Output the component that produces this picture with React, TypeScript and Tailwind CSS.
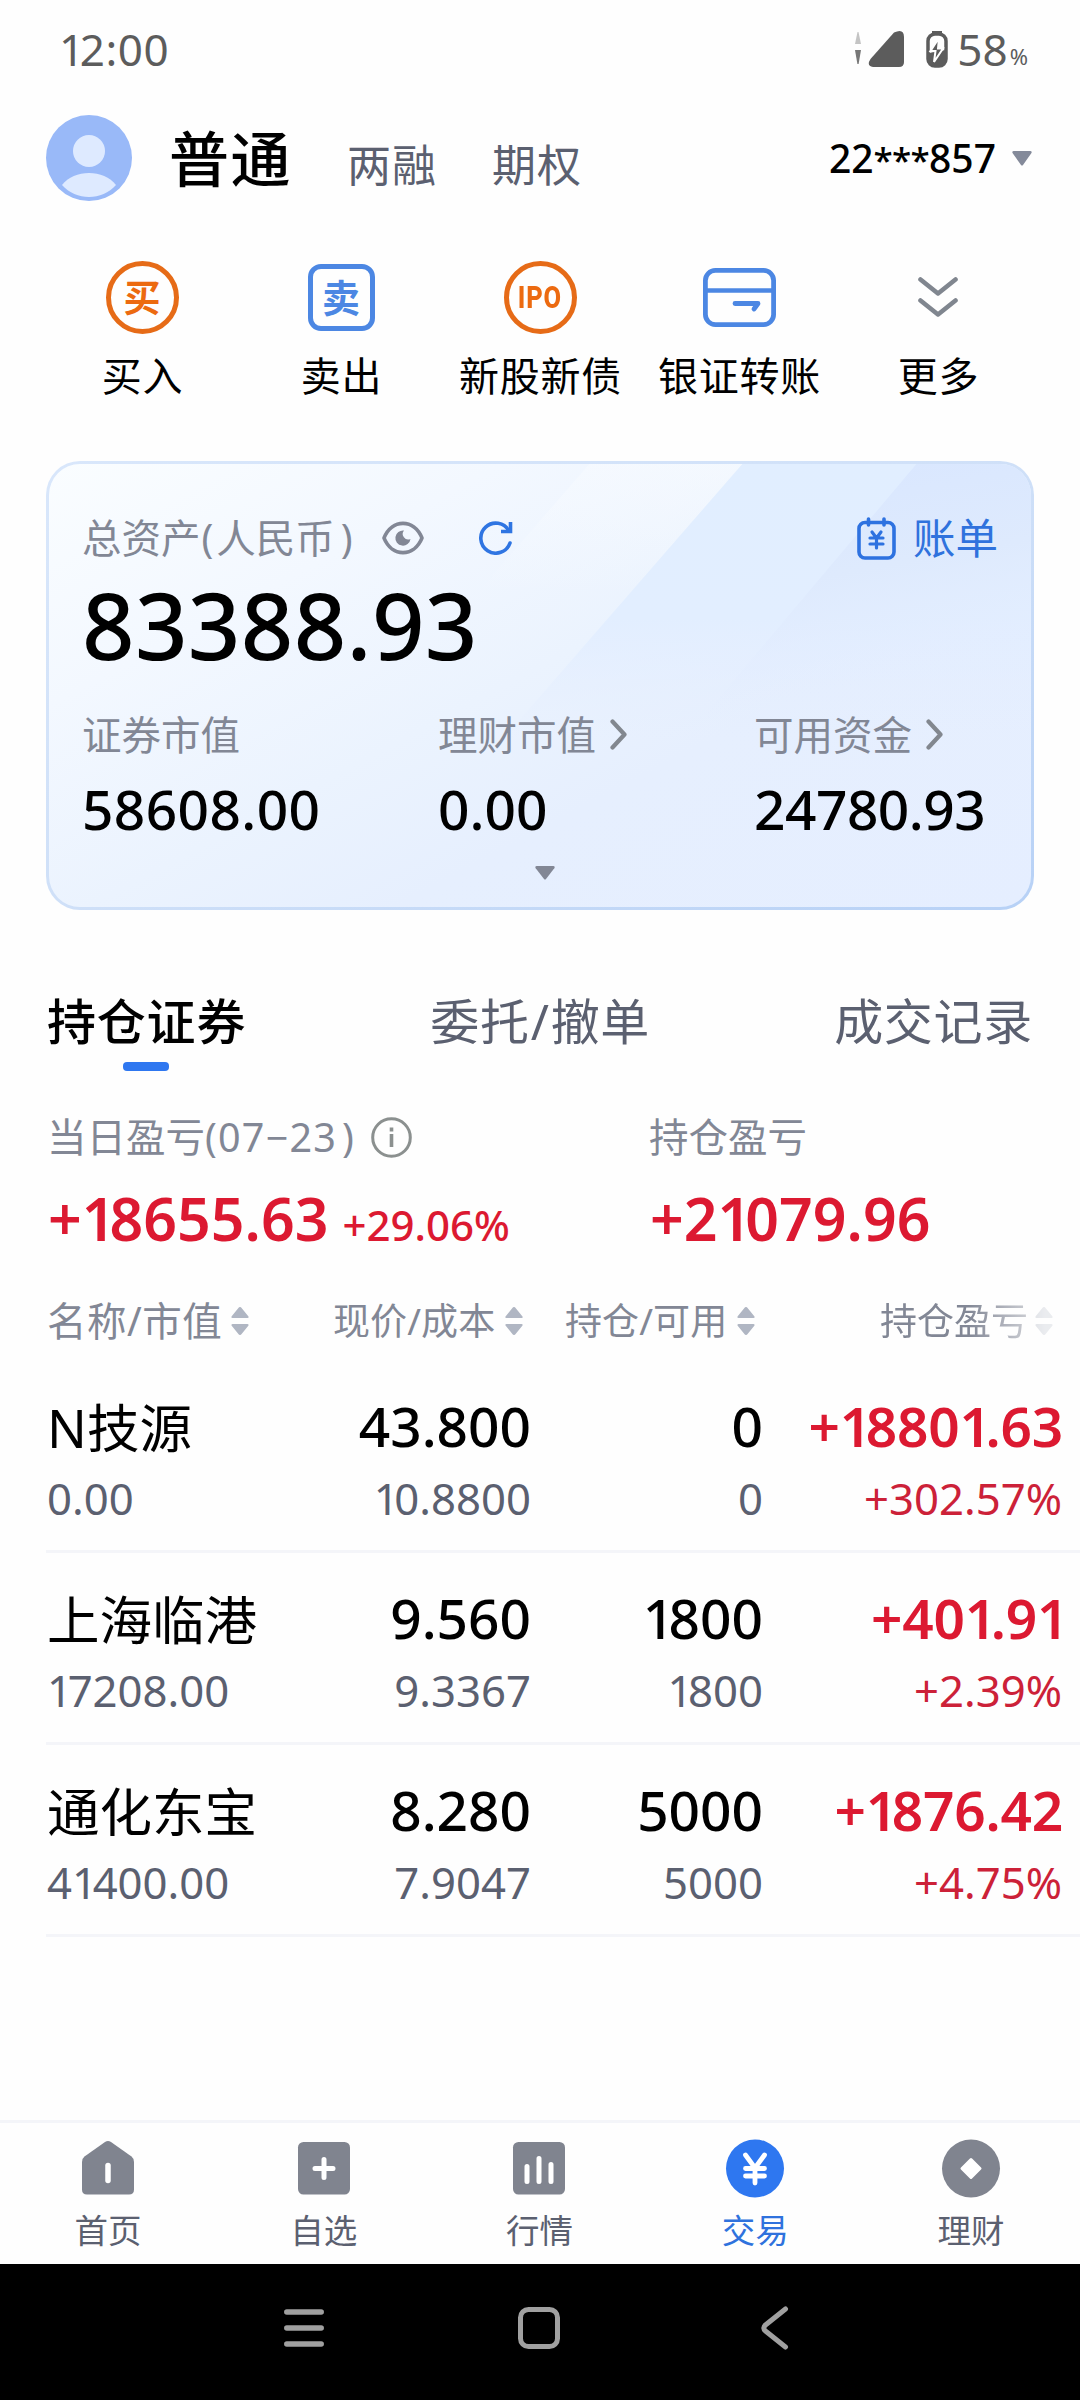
import type { ReactNode } from "react";

// Figures are set with a narrow "1" and a compact asterisk.
function Num({ children, className = "" }: { children: string; className?: string }) {
  return (
    <span className={"whitespace-nowrap " + className}>
      {children.split(/(1|\*+)/).map((part, i) => {
        if (part === "1") return <span key={i} className="tracking-[-0.100em]">1</span>;
        if (part.startsWith("*")) return <span key={i} className="text-[0.900em] tracking-[-0.020em]">{part}</span>;
        return part;
      })}
    </span>
  );
}

function StatusBar() {
  return (
    <div className="flex h-[98px] shrink-0 items-center pl-[59px] pr-[52px] text-[#5c5c5c]">
      <Num className="text-[44px] leading-[50px] tracking-[0.500px]">12:00</Num>
      <svg className="ml-auto" width="96" height="40" viewBox="0 0 96 40">
        <path d="M4.500 3h1l2.500 12h-6z" fill="#c4c4c4" />
        <path d="M2 21h6L5.600 35h-1.200z" fill="#777" />
        <path d="M41 3.500Q51 -1 51 8v25q0 5-5 5H20q-7-1-2.500-8z" fill="#5c5c5c" />
        <path d="M79 2h10v3h-10z" fill="#5c5c5c" />
        <rect x="75" y="5" width="18" height="32" rx="7" fill="#fff" stroke="#5c5c5c" strokeWidth="3.500" />
        <path d="M74 24c5 0 9-2 19-3v9q0 7-7 7h-4q-8 0-8-7z" fill="#5c5c5c" />
        <path d="M86 9L77.500 22h5L81 33l9-13.500h-5z" fill="#5c5c5c" stroke="#fff" strokeWidth="2" />
      </svg>
      <span className="ml-[8px] text-[44px] leading-[50px]">58</span>
      <span className="ml-[2px] mt-[13px] text-[22px] leading-[24px]">%</span>
    </div>
  );
}

function Header() {
  return (
    <div className="flex h-[120px] shrink-0 items-center pl-[46px] pr-[48px]">
      <svg width="86" height="86" viewBox="0 0 86 86">
        <circle cx="43" cy="43" r="43" fill="#99b9f8" />
        <circle cx="43" cy="36" r="16" fill="#deeaff" />
        <path d="M16 70C28 54 58 54 70 70C56 86 30 86 16 70z" fill="#deeaff" />
      </svg>
      <span className="ml-[37px] mt-[2px] text-[60px] font-medium leading-[80px] tracking-[1.500px] text-black">普通</span>
      <span className="ml-[55px] mt-[13px] text-[44px] leading-[60px] tracking-[1px] text-[#5b6070]">两融</span>
      <span className="ml-[55px] mt-[13px] text-[44px] leading-[60px] tracking-[1px] text-[#5b6070]">期权</span>
      <Num className="ml-auto text-[39px] font-medium leading-[50px] text-black">22***857</Num>
      <svg className="ml-[16px]" width="20" height="15" viewBox="0 0 20 15">
        <path d="M1.500 0h17q2 0.500 0.800 2.200L11 14q-1 1-2 0L0.700 2.200Q-0.500 0.500 1.500 0z" fill="#848a9a" />
      </svg>
    </div>
  );
}

function Action({ label, children }: { label: string; children: ReactNode }) {
  return (
    <div className="flex flex-col items-center">
      <div className="flex h-[80px] items-center justify-center">{children}</div>
      <span className="mt-[15px] whitespace-nowrap pl-px text-[40px] leading-[48px] tracking-[0.700px] text-black">{label}</span>
    </div>
  );
}

function Actions() {
  return (
    <div className="mt-[39px] grid shrink-0 grid-cols-[repeat(5,199px)] justify-center">
      <Action label="买入">
        <span className="flex h-[73px] w-[73px] items-center justify-center rounded-full border-[5px] border-[#e66b17] text-[37px] font-bold leading-none text-[#ec6a10]">买</span>
      </Action>
      <Action label="卖出">
        <span className="flex h-[67px] w-[67px] items-center justify-center rounded-[13px] border-[5px] border-[#4c87e3] text-[38px] font-bold leading-none text-[#4c87e3]">卖</span>
      </Action>
      <Action label="新股新债">
        <span className="flex h-[73px] w-[73px] items-center justify-center rounded-full border-[5px] border-[#e66b17] text-[#ec6a10]">
          <span className="scale-x-[0.820] font-['Roboto',sans-serif] text-[31px] font-extrabold leading-none tracking-[1px]">IPO</span>
        </span>
      </Action>
      <Action label="银证转账">
        <svg width="73" height="59" viewBox="0 0 73 59" fill="none" stroke="#4c87e3" strokeWidth="4.800">
          <rect x="2.400" y="2.400" width="68.200" height="54.200" rx="10" />
          <path d="M2 22.500h69" strokeWidth="4.400" />
          <path d="M32 35.500h23l-4 5.500" strokeLinecap="round" strokeLinejoin="round" />
        </svg>
      </Action>
      <Action label="更多">
        <svg width="40" height="40" viewBox="0 0 40 40" fill="none" stroke="#80868f" strokeWidth="4.600" strokeLinecap="round" strokeLinejoin="round">
          <path d="M2.500 2.500L20 16.500L37.500 2.500M2.500 23.500L20 37.500L37.500 23.500" />
        </svg>
      </Action>
    </div>
  );
}

function Chevron() {
  return (
    <svg width="17" height="32" viewBox="0 0 17 32" fill="none" stroke="#82878f" strokeWidth="4.200" strokeLinecap="round" strokeLinejoin="round">
      <path d="M2.500 2.500L14.500 15.500L2.500 28.500" />
    </svg>
  );
}

function CardSheen() {
  return (
    <svg className="absolute inset-0" width="982" height="443" viewBox="3 3 982 443">
      <defs>
        <linearGradient id="a" x1="0" y1="0" x2="0" y2="1">
          <stop offset="0" stopColor="#f8fbff" stopOpacity="0.550" />
          <stop offset="0.300" stopColor="#f8fbff" stopOpacity="0" />
        </linearGradient>
        <linearGradient id="b" x1="0" y1="0" x2="0" y2="1">
          <stop offset="0" stopColor="#e1eeff" />
          <stop offset="0.350" stopColor="#e2eeff" />
          <stop offset="0.620" stopColor="#e4edff" stopOpacity="0" />
        </linearGradient>
        <linearGradient id="c" x1="0.300" y1="0" x2="0.500" y2="1">
          <stop offset="0" stopColor="#d8e6ff" />
          <stop offset="0.300" stopColor="#deeafd" />
          <stop offset="0.560" stopColor="#e4edff" stopOpacity="0" />
        </linearGradient>
      </defs>
      <path d="M546 0H699L308 449H155z" fill="url(#a)" />
      <path d="M699 0H988V449H308z" fill="url(#b)" />
      <path d="M873 0H988V449H494z" fill="url(#c)" />
    </svg>
  );
}

function AssetCard() {
  return (
    <div className="mx-[46px] mt-[61px] h-[449px] shrink-0 rounded-[34px] bg-linear-to-br from-[#d9e7fb] via-[#cfe0f8] to-[#b7d1f6] p-[3px]">
      <div className="relative h-full overflow-hidden rounded-[31px] bg-[linear-gradient(152deg,#fafdff_0%,#f3f8ff_25%,#ebf3fe_48%,#e6effe_65%,#e5eeff_100%)]">
        <CardSheen />
        <div className="relative pl-[33px] pr-[33px] pt-[50px]">
          <div className="flex h-[48px] items-center">
            <span className="whitespace-nowrap text-[39.500px] leading-[48px] text-[#828795]">
              总资产<span className="mr-[3px] ml-[1px]">(</span>人民币<span className="ml-[6px]">)</span>
            </span>
            <svg className="ml-[29px]" width="42" height="34" viewBox="0 0 42 34">
              <path d="M2 17C10-2.500 32-2.500 40 17C32 36.500 10 36.500 2 17z" fill="none" stroke="#828795" strokeWidth="3.600" strokeLinejoin="round" />
              <path d="M22 9.500a7.600 7.600 0 1 0 6.500 8.500a5.500 5.500 0 0 1-6.500-8.500z" fill="#828795" />
            </svg>
            <svg className="ml-[55px]" width="34" height="34" viewBox="0 0 34 34" fill="none" stroke="#2f75e2" strokeWidth="3.600">
              <path d="M31 22A15 15 0 1 1 30 10" strokeLinecap="round" />
              <path d="M31.500 1V10.500H22" />
            </svg>
            <svg className="ml-auto" width="39" height="43" viewBox="0 0 39 43" fill="none" stroke="#2e72e0" strokeWidth="3.600" strokeLinecap="round">
              <rect x="2" y="5.500" width="35" height="35.500" rx="6" />
              <path d="M11.500 2v6M27 2v6" />
              <path d="M15 15l4.500 6l4.500-6M13 21h13M13 27h13M19.500 21v10" strokeWidth="3.200" />
            </svg>
            <span className="ml-[17px] text-[42.500px] leading-[48px] text-[#2f72dd]">账单</span>
          </div>
          <Num className="mt-[13px] block h-[100px] text-[92px] font-medium leading-[100px] tracking-[0.300px] text-black">83388.93</Num>
          <div className="mt-[36px] grid grid-cols-[356px_316px_auto] text-[39.500px] leading-[48px] text-[#828795]">
            <span>证券市值</span>
            <span className="flex items-center gap-[14px]">理财市值<Chevron /></span>
            <span className="flex items-center gap-[14px]">可用资金<Chevron /></span>
          </div>
          <div className="mt-[20px] grid grid-cols-[356px_316px_auto] text-[55px] font-medium leading-[60px] text-black">
            <Num className="tracking-[0.400px]">58608.00</Num>
            <Num>0.00</Num>
            <Num className="tracking-[-0.500px]">24780.93</Num>
          </div>
          <svg className="ml-[453px] mt-[27px]" width="20" height="14" viewBox="0 0 20 14">
            <path d="M1.500 0h17q2 0.500 0.800 2.200L11 13q-1 1-2 0L0.700 2.200Q-0.500 0.500 1.500 0z" fill="#828795" />
          </svg>
        </div>
      </div>
    </div>
  );
}

function Tabs() {
  return (
    <div className="mt-[81px] flex h-[80px] shrink-0 items-start justify-between pl-[47px] pr-[47px] text-[49px] leading-[60px] text-[#5b6070]">
      <div className="flex flex-col items-start text-black">
        <span className="font-medium tracking-[0.800px]">持仓证券</span>
        <span className="ml-[76px] mt-[11px] h-[9px] w-[46px] rounded-[4px] bg-[#2e77f0]" />
      </div>
      <span className="tracking-[0.700px]">委托<span className="mx-[1px]">/</span>撤单</span>
      <span className="tracking-[0.700px]">成交记录</span>
    </div>
  );
}

function Profit() {
  return (
    <div className="mt-[42px] grid shrink-0 grid-cols-[602px_auto] pl-[47px]">
      <span className="flex items-center text-[39.500px] leading-[48px] text-[#828795]">
        <span>当日盈亏<span className="tracking-[1.200px]">(07−23<span className="ml-[5px]">)</span></span></span>
        <svg className="ml-[16px]" width="41" height="41" viewBox="0 0 41 41" fill="none" stroke="#8b908f" strokeWidth="3">
          <circle cx="20.500" cy="20.500" r="18.800" />
          <path d="M20.500 17v13" strokeWidth="3.600" />
          <path d="M20.500 10.500v4" strokeWidth="3.600" />
        </svg>
      </span>
      <span className="text-[39.500px] leading-[48px] text-[#828795]">持仓盈亏</span>
      <span className="mt-[22px] flex h-[70px] items-baseline text-[59px] font-semibold leading-[70px] text-[#dc1931]">
        <Num className="pl-px">+18655.63</Num>
        <Num className="ml-[14px] text-[42px] font-medium">+29.06%</Num>
      </span>
      <Num className="mt-[22px] pl-px text-[59px] font-semibold leading-[70px] text-[#dc1931]">+21079.96</Num>
    </div>
  );
}

function Sort() {
  return (
    <svg width="18" height="28" viewBox="0 0 18 28" fill="#b0b6c3">
      <path d="M9 0Q10 0 10.800 1.200L17.500 9.500Q18 11 16.500 11H1.500Q0 11 0.500 9.500L7.200 1.200Q8 0 9 0zM9 28Q8 28 7.200 26.800L0.500 18.500Q0 17 1.500 17H16.500Q18 17 17.500 18.500L10.800 26.800Q10 28 9 28z" />
    </svg>
  );
}

function TableHead() {
  return (
    <div className="mt-[44px] grid h-[48px] shrink-0 grid-cols-[286px_232px_315px_auto] pl-[47px] text-[37px] leading-[48px] text-[#828795]">
      <span className="flex items-center gap-[9px] text-[39.500px] tracking-[0.500px]">名称/市值<Sort /></span>
      <span className="flex items-center gap-[10px] tracking-[0.100px]">现价/成本<Sort /></span>
      <span className="flex items-center gap-[10px] tracking-[0.100px]">持仓/可用<Sort /></span>
      <span className="flex items-center gap-[7px] [mask-image:linear-gradient(to_right,#000_88px,rgba(0,0,0,0.250)_165px)]">持仓盈亏<Sort /></span>
    </div>
  );
}

const holdings = [
  { name: "N技源", value: "0.00", price: "43.800", cost: "10.8800", held: "0", usable: "0", profit: "+18801.63", rate: "+302.57%" },
  { name: "上海临港", value: "17208.00", price: "9.560", cost: "9.3367", held: "1800", usable: "1800", profit: "+401.91", rate: "+2.39%" },
  { name: "通化东宝", value: "41400.00", price: "8.280", cost: "7.9047", held: "5000", usable: "5000", profit: "+1876.42", rate: "+4.75%" },
];

function Holdings() {
  return (
    <div className="mt-[16px] shrink-0 pl-[46px]">
      {holdings.map((h) => (
        <div key={h.name} className="h-[192px] border-b-[3px] border-[#f4f5f9] pt-[33px]">
          <div className="grid grid-cols-[234px_251px_232px_300px] text-right text-[55px] font-medium leading-[64px] text-black">
            <span className="whitespace-nowrap pl-px pt-[2px] text-left text-[52.500px] font-normal">{h.name}</span>
            <Num>{h.price}</Num>
            <Num>{h.held}</Num>
            <Num className="font-semibold tracking-[-0.200px] text-[#dc1931]">{h.profit}</Num>
          </div>
          <div className="mt-[13px] grid grid-cols-[234px_251px_232px_299px] text-right text-[43.700px] leading-[50px] text-[#5b6070]">
            <Num className="pl-px text-left">{h.value}</Num>
            <Num>{h.cost}</Num>
            <Num>{h.usable}</Num>
            <Num className="text-[#cc2138]">{h.rate}</Num>
          </div>
        </div>
      ))}
    </div>
  );
}

function NavItem({ label, active, children }: { label: string; active?: boolean; children: ReactNode }) {
  return (
    <div className={"flex flex-col items-center pt-[15px] " + (active ? "text-[#2f72dd]" : "text-[#5b6070]")}>
      <svg width="60" height="60" viewBox="0 0 60 60" fill="none" stroke="#fff" strokeWidth="5" strokeLinecap="round">
        {children}
      </svg>
      <span className="mt-[10px] text-[33.500px] leading-[44px]">{label}</span>
    </div>
  );
}

function BottomNav() {
  return (
    <div className="mt-auto grid h-[144px] shrink-0 grid-cols-5 border-t-[3px] border-[#f4f5f9] pr-px">
      <NavItem label="首页">
        <path d="M27 4Q30 2 33 4L53.500 18.500Q56 20.500 56 24V51.500Q56 56.500 51 56.500H9Q4 56.500 4 51.500V24Q4 20.500 6.500 18.500z" fill="#80848f" stroke="none" />
        <path d="M30 27.500v15" strokeWidth="5.500" />
      </NavItem>
      <NavItem label="自选">
        <rect x="4" y="4" width="52" height="52.500" rx="5.500" fill="#80848f" stroke="none" />
        <path d="M30 21.500v18M21 30.500h18" />
      </NavItem>
      <NavItem label="行情">
        <rect x="4" y="4" width="52" height="52.500" rx="5.500" fill="#80848f" stroke="none" />
        <path d="M18 28.500v15M30 20.500v23M42 26.500v17" />
      </NavItem>
      <NavItem label="交易" active>
        <circle cx="30" cy="30.500" r="29" fill="#2e77f0" stroke="none" />
        <path d="M20.500 17L30 30l9.500-13M20.500 30.500h19M20.500 38h19M30 30v15" strokeWidth="4.800" />
      </NavItem>
      <NavItem label="理财">
        <circle cx="30" cy="30.500" r="29" fill="#80848f" stroke="none" />
        <path d="M30 21.500L39 30.500L30 39.500L21 30.500z" fill="#fff" strokeWidth="3" strokeLinejoin="round" />
      </NavItem>
    </div>
  );
}

function SystemNav() {
  return (
    <div className="flex h-[136px] shrink-0 items-start bg-black pl-[284px] pt-[42px]">
      <svg width="40" height="44" viewBox="0 0 40 44" stroke="#a0a0a0" strokeWidth="5.500" strokeLinecap="round">
        <path d="M2.800 6h34.400M2.800 22h34.400M2.800 38h34.400" />
      </svg>
      <svg className="ml-[193px]" width="44" height="44" viewBox="0 0 44 44" fill="none" stroke="#a0a0a0" strokeWidth="5">
        <rect x="3.500" y="3.500" width="37" height="37" rx="8" />
      </svg>
      <svg className="ml-[199px]" width="30" height="44" viewBox="0 0 30 44" fill="none" stroke="#a0a0a0" strokeWidth="5" strokeLinecap="round">
        <path d="M25.500 3L5.500 19Q2 22 5.500 25L25.500 41" />
      </svg>
    </div>
  );
}

export default function App() {
  return (
    <div
      lang="zh-CN"
      className="flex h-[2400px] w-[1080px] flex-col overflow-hidden bg-[#fefefe] font-['Noto_Sans','Noto_Sans_CJK_SC',sans-serif]"
    >
      <StatusBar />
      <Header />
      <Actions />
      <AssetCard />
      <Tabs />
      <Profit />
      <TableHead />
      <Holdings />
      <BottomNav />
      <SystemNav />
    </div>
  );
}
